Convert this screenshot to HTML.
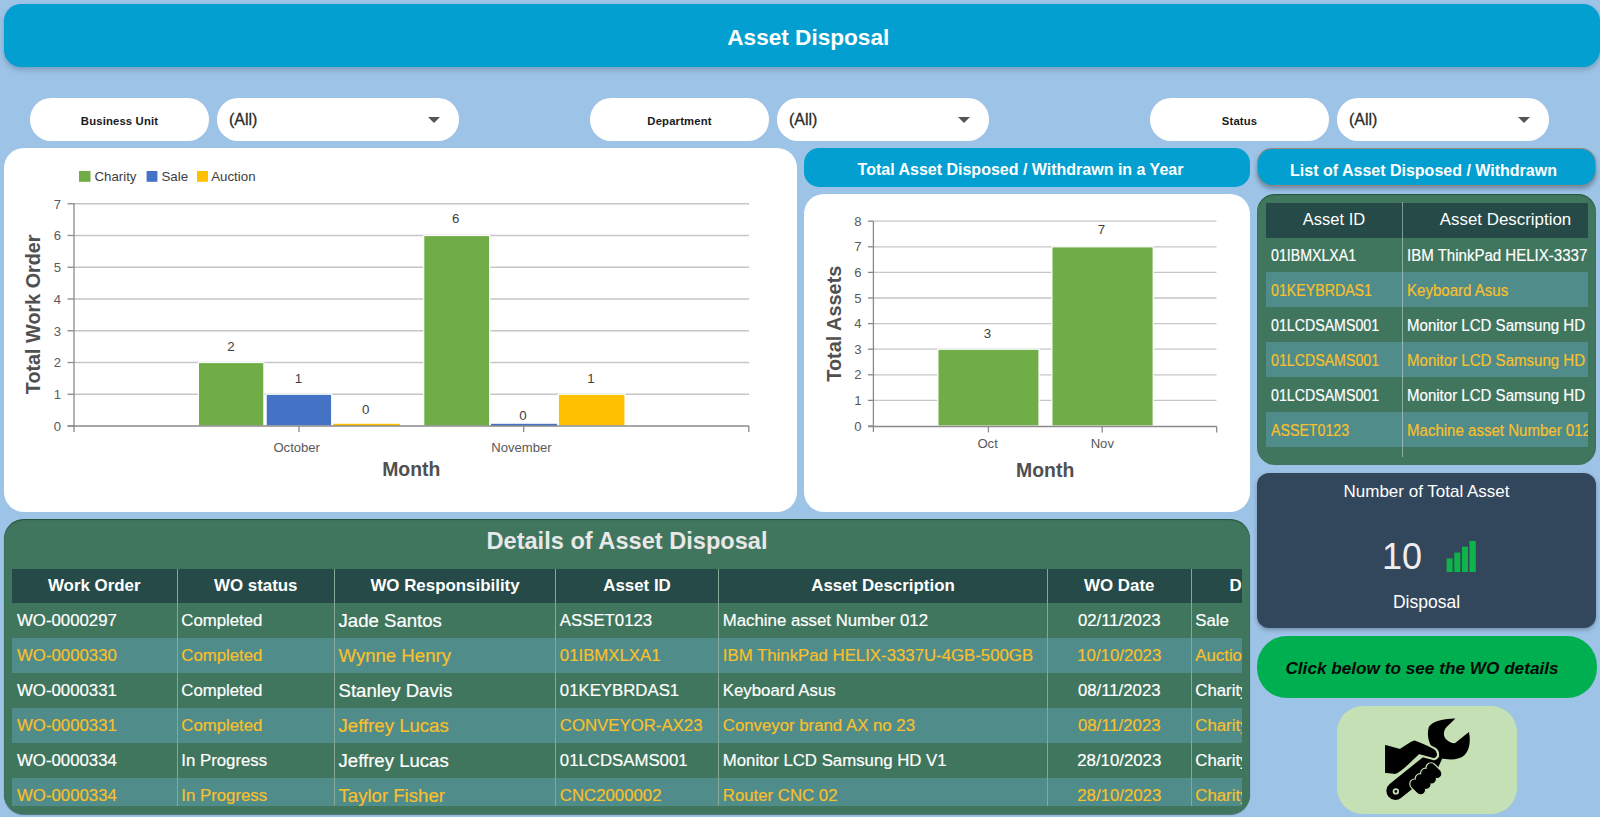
<!DOCTYPE html>
<html><head><meta charset="utf-8">
<style>
*{margin:0;padding:0;box-sizing:border-box}
html,body{width:1600px;height:817px;overflow:hidden;background:#9DC3E6;font-family:"Liberation Sans",sans-serif}
.a{position:absolute}
.hdr{left:4px;top:4px;width:1596px;height:63px;border-radius:17px;background:#039FD0;box-shadow:0 3px 5px rgba(60,90,120,.35);color:#fff;font-weight:bold;font-size:22.6px;text-align:center;line-height:67.5px;padding-left:12.6px}
.pill{top:98px;height:43px;border-radius:21px;background:#fff}
.lbl{font-weight:bold;font-size:11.3px;color:#1a1a22;text-align:center;line-height:47px;letter-spacing:0.15px}
.dd{font-size:16px;color:#2a2a2a;line-height:43px;padding-left:12px;-webkit-text-stroke:0.3px currentColor}
.dd i{position:absolute;right:19px;top:19px;width:0;height:0;border-left:6px solid transparent;border-right:6px solid transparent;border-top:6px solid #555}
.panel{background:#fff;border-radius:20px}
.bh{background:#039FD0;color:#fff;font-weight:bold;font-size:16px;text-align:center}
table{border-collapse:collapse;table-layout:fixed}
td,th{overflow:hidden;white-space:nowrap}

.lr{left:1271px;width:131px;height:35px;line-height:38px;font-size:15.6px;overflow:hidden;white-space:nowrap}
.lr2{left:1406.5px;width:181.5px;height:35px;line-height:38px;font-size:16px;overflow:hidden;white-space:nowrap}
.lr span{display:inline-block;transform:scaleX(.91);transform-origin:0 50%}
.lr2 span{display:inline-block;transform:scaleX(.94);transform-origin:0 50%}
.dt{width:1230px;color:#fff;font-size:16.8px}
.dt th{height:34px;background:#264A47;font-weight:bold;font-size:16.9px;text-align:center;border-left:1px solid rgba(200,220,210,.5)}
.dt td{height:35px;padding-left:3.8px;border-left:1px solid rgba(200,220,210,.5)}
.dt th:first-child,.dt td:first-child{border-left:none}
.dt td:first-child{padding-left:5px}
.dt td,.lr,.lr2{-webkit-text-stroke:0.2px currentColor}
.dt tr.e td{background:#508C8A;color:#F8C02A}
.dt td.nm{font-size:18.6px;padding-left:3.5px}
.dt td.c{text-align:center;padding-left:0}
</style></head><body>
<div class="a hdr">Asset Disposal</div>

<div class="a pill lbl" style="left:30px;width:179px">Business Unit</div>
<div class="a pill dd" style="left:217px;width:242px">(All)<i></i></div>
<div class="a pill lbl" style="left:590px;width:179px">Department</div>
<div class="a pill dd" style="left:777px;width:212px">(All)<i></i></div>
<div class="a pill lbl" style="left:1150px;width:179px">Status</div>
<div class="a pill dd" style="left:1337px;width:212px">(All)<i></i></div>

<div class="a panel" style="left:4px;top:148px;width:793px;height:364px"></div>
<div class="a bh" style="left:804px;top:148px;width:446px;height:39px;border-radius:15px;line-height:43px;padding-right:13px">Total Asset Disposed / Withdrawn in a Year</div>
<div class="a panel" style="left:804px;top:194px;width:446px;height:318px"></div>
<svg class="a" style="left:0;top:0" width="1600" height="817" viewBox="0 0 1600 817">
<style>.ax{font-size:13.1px;fill:#595959}.dl{font-size:13.3px;fill:#404040}.tt{font-size:19.4px;font-weight:bold;fill:#505050}.lg{font-size:13.3px;fill:#404040}</style>
<line x1="74" y1="394.25" x2="749" y2="394.25" stroke="#C6C6C6" stroke-width="1.3"/>
<line x1="74" y1="362.50" x2="749" y2="362.50" stroke="#C6C6C6" stroke-width="1.3"/>
<line x1="74" y1="330.75" x2="749" y2="330.75" stroke="#C6C6C6" stroke-width="1.3"/>
<line x1="74" y1="299.00" x2="749" y2="299.00" stroke="#C6C6C6" stroke-width="1.3"/>
<line x1="74" y1="267.25" x2="749" y2="267.25" stroke="#C6C6C6" stroke-width="1.3"/>
<line x1="74" y1="235.50" x2="749" y2="235.50" stroke="#C6C6C6" stroke-width="1.3"/>
<line x1="74" y1="203.75" x2="749" y2="203.75" stroke="#C6C6C6" stroke-width="1.3"/>
<line x1="67.5" y1="426.00" x2="74" y2="426.00" stroke="#8A8A8A" stroke-width="1.3"/>
<text x="61" y="430.80" text-anchor="end" class="ax">0</text>
<line x1="67.5" y1="394.25" x2="74" y2="394.25" stroke="#8A8A8A" stroke-width="1.3"/>
<text x="61" y="399.05" text-anchor="end" class="ax">1</text>
<line x1="67.5" y1="362.50" x2="74" y2="362.50" stroke="#8A8A8A" stroke-width="1.3"/>
<text x="61" y="367.30" text-anchor="end" class="ax">2</text>
<line x1="67.5" y1="330.75" x2="74" y2="330.75" stroke="#8A8A8A" stroke-width="1.3"/>
<text x="61" y="335.55" text-anchor="end" class="ax">3</text>
<line x1="67.5" y1="299.00" x2="74" y2="299.00" stroke="#8A8A8A" stroke-width="1.3"/>
<text x="61" y="303.80" text-anchor="end" class="ax">4</text>
<line x1="67.5" y1="267.25" x2="74" y2="267.25" stroke="#8A8A8A" stroke-width="1.3"/>
<text x="61" y="272.05" text-anchor="end" class="ax">5</text>
<line x1="67.5" y1="235.50" x2="74" y2="235.50" stroke="#8A8A8A" stroke-width="1.3"/>
<text x="61" y="240.30" text-anchor="end" class="ax">6</text>
<line x1="67.5" y1="203.75" x2="74" y2="203.75" stroke="#8A8A8A" stroke-width="1.3"/>
<text x="61" y="208.55" text-anchor="end" class="ax">7</text>
<rect x="198.4" y="362.50" width="65.5" height="63.50" fill="#70AD47" stroke="#fff" stroke-width="1.2"/>
<rect x="266.1" y="394.25" width="65.6" height="31.75" fill="#4472C4" stroke="#fff" stroke-width="1.2"/>
<rect x="333.1" y="423.8" width="66.7" height="2.2" fill="#FFC000"/>
<rect x="423.7" y="235.50" width="66.0" height="190.50" fill="#70AD47" stroke="#fff" stroke-width="1.2"/>
<rect x="491" y="423.8" width="66.0" height="2.2" fill="#4472C4"/>
<rect x="558.3" y="394.25" width="66.7" height="31.75" fill="#FFC000" stroke="#fff" stroke-width="1.2"/>
<line x1="74" y1="203" x2="74" y2="432" stroke="#8A8A8A" stroke-width="1.3"/>
<line x1="67.5" y1="426" x2="749" y2="426" stroke="#8A8A8A" stroke-width="1.3"/>
<line x1="299" y1="426" x2="299" y2="432" stroke="#8A8A8A" stroke-width="1.3"/>
<line x1="523.7" y1="426" x2="523.7" y2="432" stroke="#8A8A8A" stroke-width="1.3"/>
<line x1="748.8" y1="426" x2="748.8" y2="432" stroke="#8A8A8A" stroke-width="1.3"/>
<text x="230.9" y="351.1" text-anchor="middle" class="dl">2</text>
<text x="298.4" y="382.9" text-anchor="middle" class="dl">1</text>
<text x="365.8" y="414.3" text-anchor="middle" class="dl">0</text>
<text x="455.8" y="223" text-anchor="middle" class="dl">6</text>
<text x="523" y="419.5" text-anchor="middle" class="dl">0</text>
<text x="591" y="383" text-anchor="middle" class="dl">1</text>
<text x="296.7" y="451.6" text-anchor="middle" class="ax">October</text>
<text x="521.5" y="451.7" text-anchor="middle" class="ax">November</text>
<text x="411.3" y="475.7" text-anchor="middle" class="tt">Month</text>
<text transform="translate(40,314.3) rotate(-90)" text-anchor="middle" class="tt" style="font-size:19.8px">Total Work Order</text>
<rect x="79" y="171" width="11.5" height="10.8" fill="#70AD47"/><text x="94.4" y="180.6" class="lg">Charity</text>
<rect x="146.6" y="171" width="10.8" height="10.8" fill="#4472C4"/><text x="161.5" y="180.6" class="lg">Sale</text>
<rect x="197" y="171" width="11" height="10.8" fill="#FFC000"/><text x="211.2" y="180.6" class="lg">Auction</text>
<line x1="873.4" y1="400.40" x2="1216.5" y2="400.40" stroke="#C6C6C6" stroke-width="1.3"/>
<line x1="873.4" y1="374.80" x2="1216.5" y2="374.80" stroke="#C6C6C6" stroke-width="1.3"/>
<line x1="873.4" y1="349.20" x2="1216.5" y2="349.20" stroke="#C6C6C6" stroke-width="1.3"/>
<line x1="873.4" y1="323.60" x2="1216.5" y2="323.60" stroke="#C6C6C6" stroke-width="1.3"/>
<line x1="873.4" y1="298.00" x2="1216.5" y2="298.00" stroke="#C6C6C6" stroke-width="1.3"/>
<line x1="873.4" y1="272.40" x2="1216.5" y2="272.40" stroke="#C6C6C6" stroke-width="1.3"/>
<line x1="873.4" y1="246.80" x2="1216.5" y2="246.80" stroke="#C6C6C6" stroke-width="1.3"/>
<line x1="873.4" y1="221.20" x2="1216.5" y2="221.20" stroke="#C6C6C6" stroke-width="1.3"/>
<line x1="868" y1="426.00" x2="873.4" y2="426.00" stroke="#8A8A8A" stroke-width="1.3"/>
<text x="861.5" y="430.50" text-anchor="end" class="ax">0</text>
<line x1="868" y1="400.40" x2="873.4" y2="400.40" stroke="#8A8A8A" stroke-width="1.3"/>
<text x="861.5" y="404.90" text-anchor="end" class="ax">1</text>
<line x1="868" y1="374.80" x2="873.4" y2="374.80" stroke="#8A8A8A" stroke-width="1.3"/>
<text x="861.5" y="379.30" text-anchor="end" class="ax">2</text>
<line x1="868" y1="349.20" x2="873.4" y2="349.20" stroke="#8A8A8A" stroke-width="1.3"/>
<text x="861.5" y="353.70" text-anchor="end" class="ax">3</text>
<line x1="868" y1="323.60" x2="873.4" y2="323.60" stroke="#8A8A8A" stroke-width="1.3"/>
<text x="861.5" y="328.10" text-anchor="end" class="ax">4</text>
<line x1="868" y1="298.00" x2="873.4" y2="298.00" stroke="#8A8A8A" stroke-width="1.3"/>
<text x="861.5" y="302.50" text-anchor="end" class="ax">5</text>
<line x1="868" y1="272.40" x2="873.4" y2="272.40" stroke="#8A8A8A" stroke-width="1.3"/>
<text x="861.5" y="276.90" text-anchor="end" class="ax">6</text>
<line x1="868" y1="246.80" x2="873.4" y2="246.80" stroke="#8A8A8A" stroke-width="1.3"/>
<text x="861.5" y="251.30" text-anchor="end" class="ax">7</text>
<line x1="868" y1="221.20" x2="873.4" y2="221.20" stroke="#8A8A8A" stroke-width="1.3"/>
<text x="861.5" y="225.70" text-anchor="end" class="ax">8</text>
<rect x="937.9" y="349.20" width="101.1" height="76.80" fill="#70AD47" stroke="#fff" stroke-width="1.2"/>
<rect x="1051.9" y="246.80" width="101.3" height="179.20" fill="#70AD47" stroke="#fff" stroke-width="1.2"/>
<line x1="873.4" y1="221" x2="873.4" y2="432" stroke="#8A8A8A" stroke-width="1.3"/>
<line x1="868" y1="426.5" x2="1216.7" y2="426.5" stroke="#8A8A8A" stroke-width="1.3"/>
<line x1="988.4" y1="426.5" x2="988.4" y2="432.4" stroke="#8A8A8A" stroke-width="1.3"/>
<line x1="1102.2" y1="426.5" x2="1102.2" y2="432.4" stroke="#8A8A8A" stroke-width="1.3"/>
<line x1="1216.7" y1="426.5" x2="1216.7" y2="432.4" stroke="#8A8A8A" stroke-width="1.3"/>
<text x="987.4" y="337.7" text-anchor="middle" class="dl">3</text>
<text x="1101.4" y="234" text-anchor="middle" class="dl">7</text>
<text x="987.6" y="448.4" text-anchor="middle" class="ax">Oct</text>
<text x="1102.3" y="448.4" text-anchor="middle" class="ax">Nov</text>
<text x="1045.2" y="476.7" text-anchor="middle" class="tt">Month</text>
<text transform="translate(841.3,323.7) rotate(-90)" text-anchor="middle" class="tt" style="font-size:19.9px">Total Assets</text>
</svg>
<div class="a bh" style="left:1257px;top:148px;width:339px;height:38px;border-radius:15px;line-height:43px;padding-right:6px;border:1px solid rgba(200,130,100,.75);box-shadow:0 3px 4px rgba(50,70,100,.45)">List of Asset Disposed / Withdrawn</div>


<div class="a" style="left:1257px;top:194px;width:339px;height:271px;border-radius:18px;background:#40765E;box-shadow:inset 0 1px 1px rgba(20,60,30,.6)"></div>
<div class="a" style="left:1266px;top:202.5px;width:322px;height:35px;background:#264A47"></div>
<div class="a" style="left:1266px;top:272px;width:322px;height:35px;background:#508C8A"></div>
<div class="a" style="left:1266px;top:342px;width:322px;height:35px;background:#508C8A"></div>
<div class="a" style="left:1266px;top:412px;width:322px;height:35px;background:#508C8A"></div>
<div class="a" style="left:1402px;top:202px;width:1px;height:255px;background:rgba(200,220,210,.55)"></div>
<div class="a lt" style="left:1266px;top:202px;width:136px;height:35px;line-height:35px;text-align:center;color:#fff;font-size:16.5px">Asset ID</div>
<div class="a lt" style="left:1403px;top:202px;width:185px;height:35px;line-height:35px;text-align:center;color:#fff;font-size:16.9px;padding-left:20px">Asset Description</div>
<div class="a lr" style="top:237px;color:#fff"><span>01IBMXLXA1</span></div><div class="a lr2" style="top:237px;color:#fff"><span>IBM ThinkPad HELIX-3337U</span></div>
<div class="a lr" style="top:272px;color:#F8C02A"><span>01KEYBRDAS1</span></div><div class="a lr2" style="top:272px;color:#F8C02A"><span>Keyboard Asus</span></div>
<div class="a lr" style="top:307px;color:#fff"><span>01LCDSAMS001</span></div><div class="a lr2" style="top:307px;color:#fff"><span>Monitor LCD Samsung HD V1</span></div>
<div class="a lr" style="top:342px;color:#F8C02A"><span>01LCDSAMS001</span></div><div class="a lr2" style="top:342px;color:#F8C02A"><span>Monitor LCD Samsung HD V1</span></div>
<div class="a lr" style="top:377px;color:#fff"><span>01LCDSAMS001</span></div><div class="a lr2" style="top:377px;color:#fff"><span>Monitor LCD Samsung HD V1</span></div>
<div class="a lr" style="top:412px;color:#F8C02A"><span>ASSET0123</span></div><div class="a lr2" style="top:412px;color:#F8C02A"><span>Machine asset Number 012</span></div>

<div class="a" style="left:1257px;top:473px;width:339px;height:155px;border-radius:12px;background:#32475B;box-shadow:0 2px 4px rgba(40,50,70,.35)"></div>
<div class="a" style="left:1257px;top:480px;width:339px;text-align:center;color:#fff;font-size:17px;line-height:24px">Number of Total Asset</div>
<div class="a" style="left:1382px;top:537px;width:60px;color:#eee;font-size:36px;line-height:40px">10</div>
<svg class="a" style="left:1446px;top:541px" width="31" height="31" viewBox="0 0 31 31">
<rect x="0.6" y="17.4" width="6" height="13.6" fill="#10B24A"/><rect x="8.3" y="11.6" width="6" height="19.4" fill="#10B24A"/><rect x="16" y="5.7" width="6" height="25.3" fill="#10B24A"/><rect x="23.5" y="0" width="6.3" height="31" fill="#10B24A"/></svg>
<div class="a" style="left:1257px;top:590px;width:339px;text-align:center;color:#fff;font-size:17.5px;line-height:24px">Disposal</div>

<div class="a" style="left:1257px;top:636px;width:340px;height:62px;border-radius:30px;background:#00B050;text-align:center;line-height:64px;font-weight:bold;font-style:italic;font-size:17.2px;color:#050a06;padding-right:10px">Click below to see the WO details</div>
<div class="a" style="left:1337px;top:706px;width:180px;height:108px;border-radius:26px;background:#C5E0B4"></div>

<svg class="a" style="left:1380px;top:712px" width="96" height="96" viewBox="0 0 817 817">
<g fill="#000" stroke="#C5E0B4" stroke-linejoin="round">
<path stroke="none" d="M480,340 C415,290 395,200 415,130 C435,85 520,55 642,55 L565,130 C540,160 538,195 556,225 C585,255 610,265 637,267 L757,170 C772,240 765,320 720,366 C680,405 600,415 511,392 Z"/>
<path stroke="none" d="M419,342 L81.9,611.9 A77,77 0 0 0 178.1,732.1 L490,482 L530,395 Z"/>
<circle cx="135" cy="676" r="27" fill="#C5E0B4" stroke="none"/>
<circle cx="135" cy="676" r="12" fill="#000" stroke="none"/>
<path stroke-width="18" d="M34,268 L167,305 C215,275 255,240 293,233 C350,255 420,285 465,310 C505,335 505,390 460,402 L335,368 C270,430 190,520 130,537 L34,527 Z"/>
<g stroke-width="20">
<rect x="-38" y="-71.5" width="76" height="146" rx="38" transform="translate(457.9,498.9) rotate(-45)"/>
<rect x="-38" y="-71.5" width="76" height="146" rx="38" transform="translate(411.9,544.8) rotate(-45)"/>
<rect x="-38" y="-71.5" width="76" height="146" rx="38" transform="translate(365.9,590.8) rotate(-45)"/>
<rect x="-38" y="-71.5" width="76" height="146" rx="38" transform="translate(320.0,636.7) rotate(-45)"/>
</g>
<g stroke="none">
<rect x="-38" y="-71.5" width="76" height="146" rx="38" transform="translate(457.9,498.9) rotate(-45)"/>
<rect x="-38" y="-71.5" width="76" height="146" rx="38" transform="translate(411.9,544.8) rotate(-45)"/>
<rect x="-38" y="-71.5" width="76" height="146" rx="38" transform="translate(365.9,590.8) rotate(-45)"/>
<rect x="-38" y="-71.5" width="76" height="146" rx="38" transform="translate(320.0,636.7) rotate(-45)"/>
</g>
</g>
</svg>

<div class="a" style="left:4px;top:519px;width:1246px;height:295px;border-radius:20px;background:#40765E;box-shadow:0 1px 1px rgba(30,60,40,.6),inset 0 1px 1px rgba(20,60,30,.6)"></div>
<div class="a" style="left:4px;top:527px;width:1246px;text-align:center;color:#E8E8E8;font-weight:bold;font-size:23.6px;line-height:28px">Details of Asset Disposal</div>
<div class="a" style="left:12px;top:569px;width:1230px;height:237px;overflow:hidden">
<table class="dt">
<colgroup><col style="width:165px"><col style="width:157.5px"><col style="width:221px"><col style="width:163px"><col style="width:329px"><col style="width:143.5px"><col style="width:120px"></colgroup>
<tr class="h"><th>Work Order</th><th>WO status</th><th>WO Responsibility</th><th>Asset ID</th><th>Asset Description</th><th>WO Date</th><th style="text-align:left;padding-left:38px">D</th></tr>
<tr><td>WO-0000297</td><td>Completed</td><td class="nm">Jade Santos</td><td>ASSET0123</td><td>Machine asset Number 012</td><td class="c">02/11/2023</td><td>Sale</td></tr>
<tr class="e"><td>WO-0000330</td><td>Completed</td><td class="nm">Wynne Henry</td><td>01IBMXLXA1</td><td>IBM ThinkPad HELIX-3337U-4GB-500GB</td><td class="c">10/10/2023</td><td>Auction</td></tr>
<tr><td>WO-0000331</td><td>Completed</td><td class="nm">Stanley Davis</td><td>01KEYBRDAS1</td><td>Keyboard Asus</td><td class="c">08/11/2023</td><td>Charity</td></tr>
<tr class="e"><td>WO-0000331</td><td>Completed</td><td class="nm">Jeffrey Lucas</td><td>CONVEYOR-AX23</td><td>Conveyor brand AX no 23</td><td class="c">08/11/2023</td><td>Charity</td></tr>
<tr><td>WO-0000334</td><td>In Progress</td><td class="nm">Jeffrey Lucas</td><td>01LCDSAMS001</td><td>Monitor LCD Samsung HD V1</td><td class="c">28/10/2023</td><td>Charity</td></tr>
<tr class="e"><td>WO-0000334</td><td>In Progress</td><td class="nm">Taylor Fisher</td><td>CNC2000002</td><td>Router CNC 02</td><td class="c">28/10/2023</td><td>Charity</td></tr>
</table>
</div>
</body></html>
